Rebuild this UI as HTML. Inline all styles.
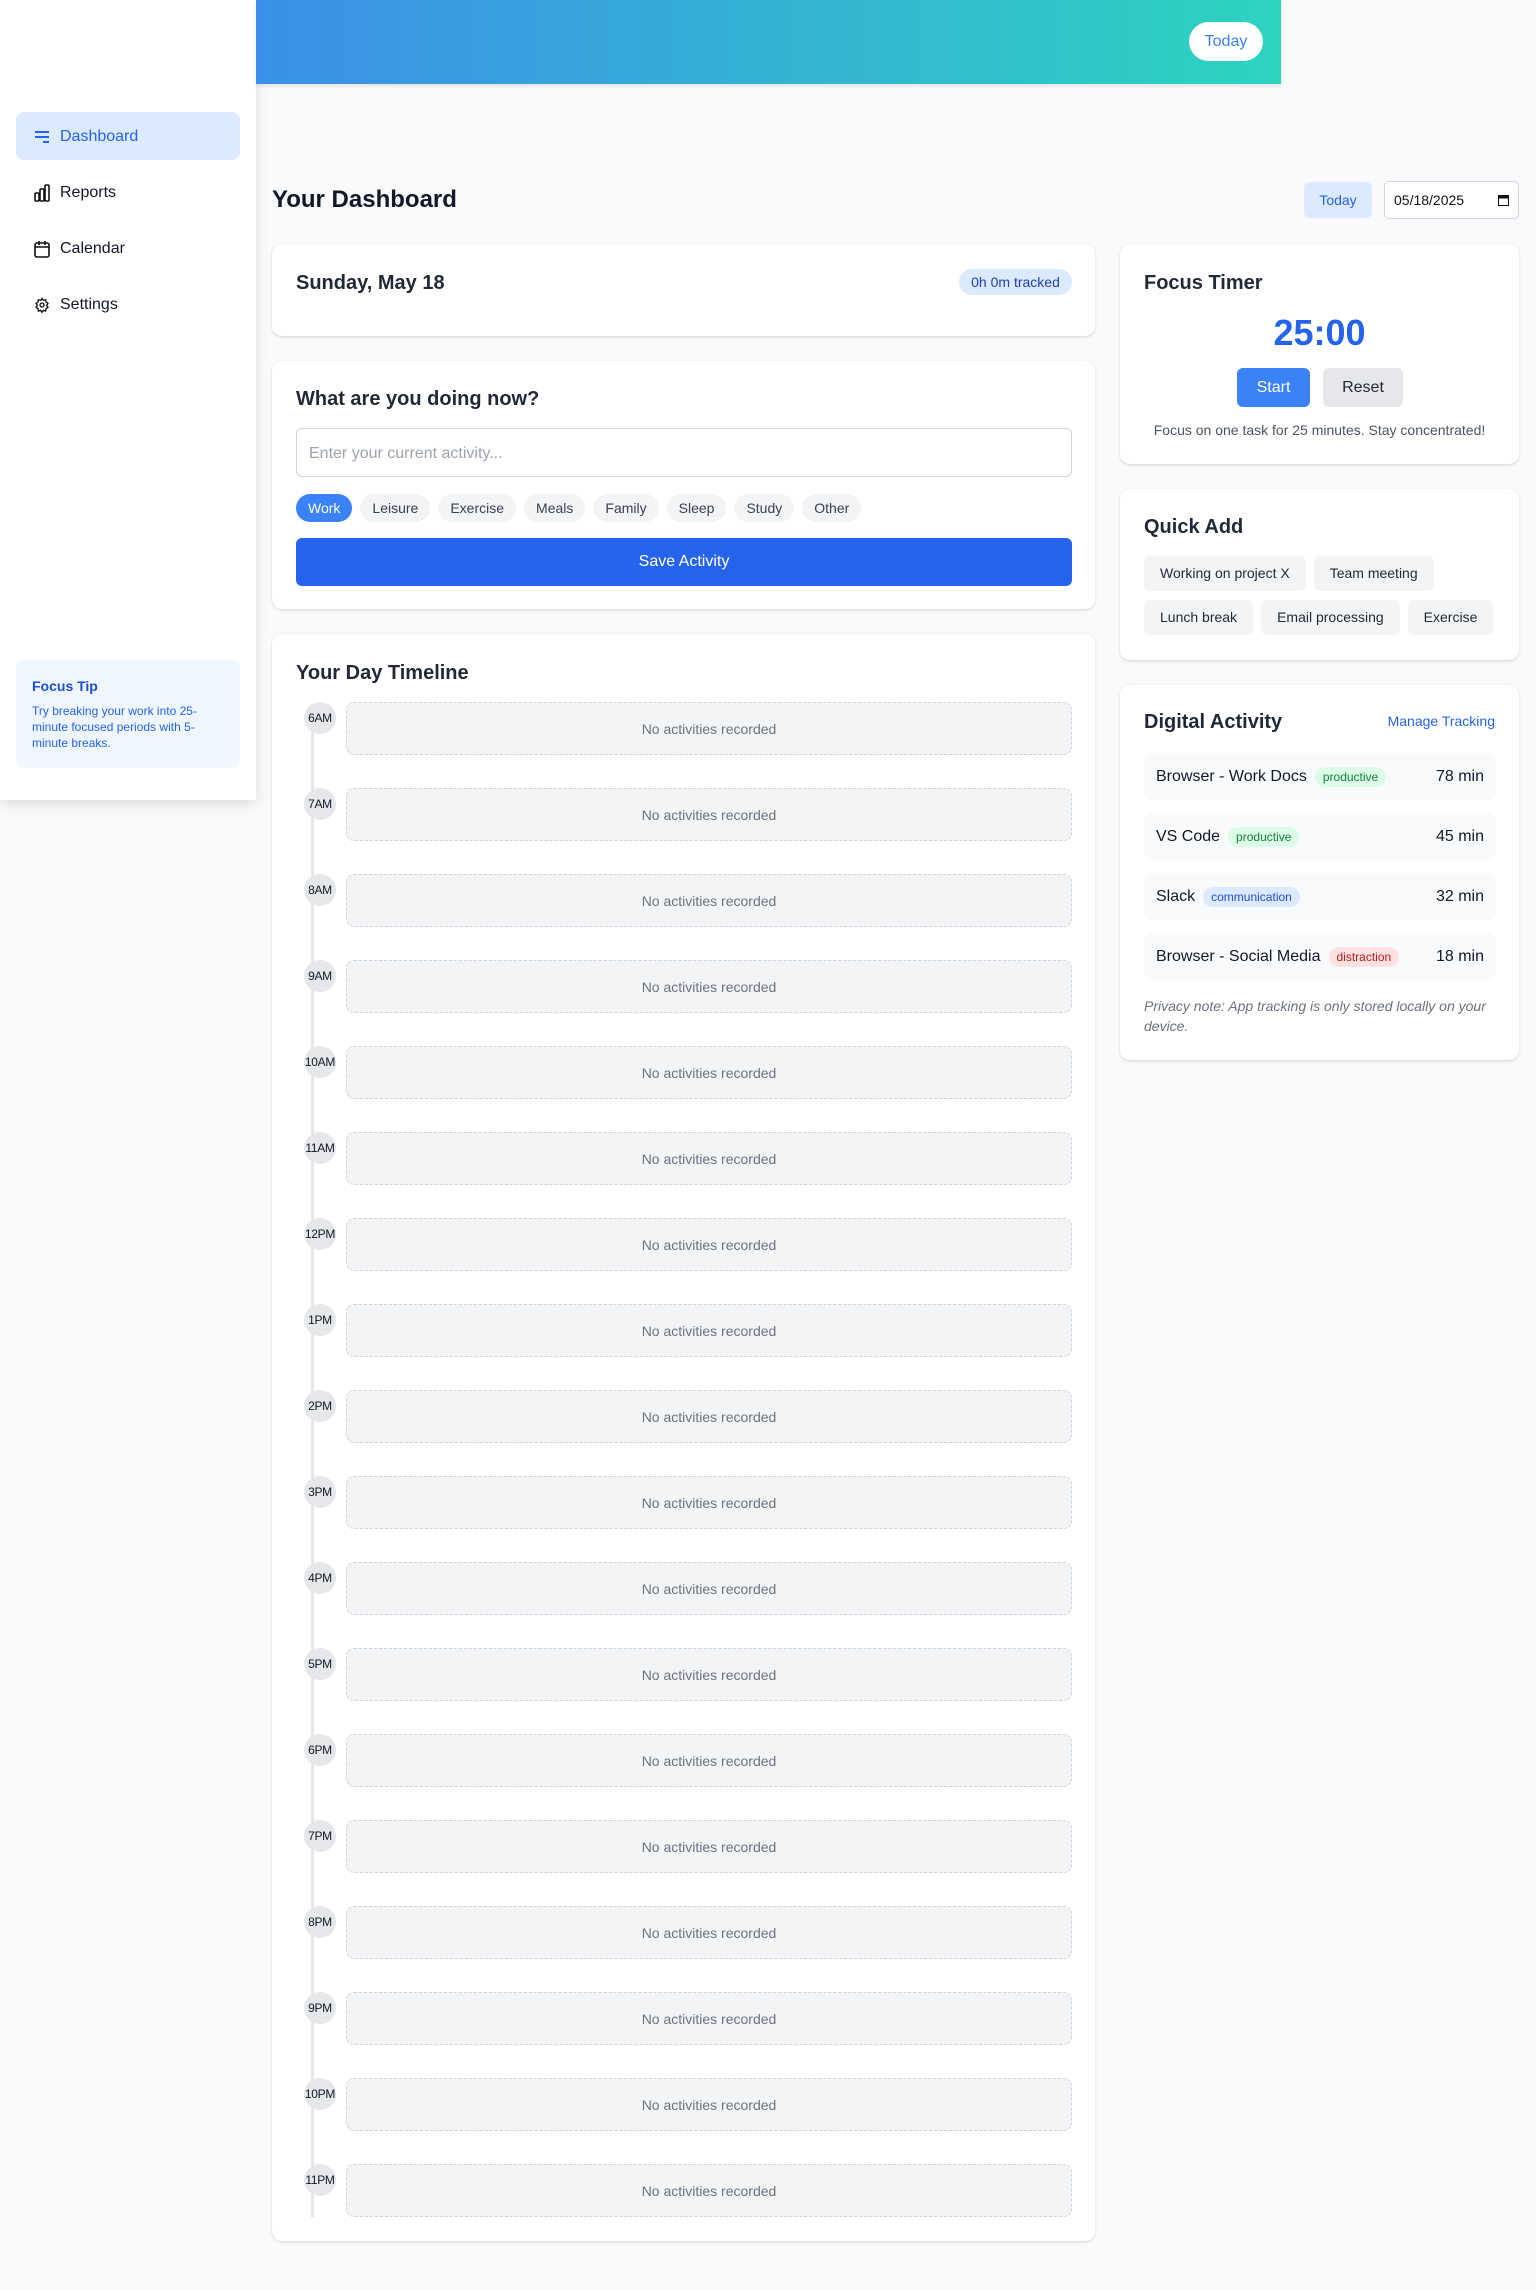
<!DOCTYPE html>
<html><head><meta charset="utf-8"><style>
*{box-sizing:border-box;margin:0;padding:0}
body{width:1536px;height:2290px;background:#f9fafb;font-family:"Liberation Sans",Arial,sans-serif;position:relative;color:#1f2937;overflow:hidden}
.abs{position:absolute}
.sidebar{left:0;top:0;width:256px;height:800px;background:#fff;box-shadow:0 4px 12px rgba(0,0,0,.12)}
.nav{position:absolute;left:16px;width:224px;height:48px;border-radius:8px;display:flex;align-items:center;padding-left:18px;padding-top:2px;font-size:16px;color:#111827}
.nav svg{margin-right:10px}
.nav.active{background:#dbeafe;color:#2563eb}
.tip{left:16px;top:660px;width:224px;height:108px;background:#eff6ff;border-radius:8px;padding:16px}
.header{left:256px;top:0;width:1025px;height:84px;background:linear-gradient(90deg,#3b8fe8,#2dd4bf);box-shadow:0 2px 4px rgba(0,0,0,.1)}
.card{position:absolute;background:#fff;border-radius:10px;box-shadow:0 1px 3px rgba(0,0,0,.1),0 1px 2px rgba(0,0,0,.06)}
h2{font-size:20px;font-weight:bold;color:#1f2937}
.chip{display:inline-block;height:28px;line-height:28px;padding:0 12px;border-radius:14px;background:#f3f4f6;color:#374151;font-size:14px;margin-right:8px}
.qa{display:inline-block;height:35px;line-height:35px;padding:0 16px;border-radius:6px;background:#f3f4f6;color:#1f2937;font-size:14px;margin-right:8px}
.slot{position:absolute;left:74px;width:726px;height:53px;background:#f3f4f6;border:1px dashed #d1d5db;border-radius:8px;text-align:center;line-height:53px;font-size:14px;color:#6b7280}
.tc{position:absolute;left:32px;width:32px;height:32px;border-radius:16px;background:#e5e7eb;font-size:12px;color:#111827;text-align:center;line-height:32px;letter-spacing:-.3px}
.item{position:absolute;left:24px;width:352px;height:47px;background:#f9fafb;border-radius:8px;display:flex;align-items:center;padding:0 12px;font-size:16px;color:#111827}
.item .t{margin-left:auto}
.bd{font-size:12px;padding:3px 8px;border-radius:10px;margin-left:8px}
.p{background:#dcfce7;color:#15803d}.c{background:#dbeafe;color:#1d4ed8}.d{background:#fee2e2;color:#b91c1c}
</style></head><body>
<div class="abs sidebar">
 <div class="nav active" style="top:112px"><svg width="16" height="16" viewBox="0 0 16 16" fill="none" stroke="#2563eb" stroke-width="2"><path d="M1 3h14M1 8h14M9 13h6"/></svg>Dashboard</div>
 <div class="nav" style="top:168px"><svg width="16" height="18" viewBox="0 0 16 18" fill="none" stroke="#111" stroke-width="1.6"><rect x="1" y="9" width="4" height="8" rx="1"/><rect x="6" y="5" width="4" height="12" rx="1"/><rect x="11" y="1" width="4" height="16" rx="1"/></svg>Reports</div>
 <div class="nav" style="top:224px"><svg width="16" height="18" viewBox="0 0 16 18" fill="none" stroke="#111" stroke-width="1.6"><rect x="1" y="3" width="14" height="14" rx="2"/><path d="M1 7h14M5 1v4M11 1v4"/></svg>Calendar</div>
 <div class="nav" style="top:280px"><svg width="16" height="16" viewBox="0 0 24 24" fill="none" stroke="#111" stroke-width="2"><circle cx="12" cy="12" r="3"/><path d="M12 2l2 3 3.5-1 .5 3.5 3 2-2 3 2 3-3 2-.5 3.5-3.5-1-2 3-2-3-3.5 1-.5-3.5-3-2 2-3-2-3 3-2 .5-3.5 3.5 1z"/></svg>Settings</div>
 <div class="abs tip"><div style="font-size:14px;font-weight:bold;color:#1d4ed8;margin-top:2px">Focus Tip</div><div style="font-size:12px;line-height:16px;color:#2563eb;margin-top:9px">Try breaking your work into 25-minute focused periods with 5-minute breaks.</div></div>
</div>
<div class="abs header"><div class="abs" style="left:933px;top:22px;width:74px;height:39px;border-radius:20px;background:#fff;color:#3b82f6;font-size:16px;text-align:center;line-height:40px">Today</div></div>

<div class="abs" style="left:272px;top:186px;font-size:24px;font-weight:bold;color:#111827">Your Dashboard</div>
<div class="abs" style="left:1304px;top:182px;width:68px;height:36px;background:#dbeafe;color:#2563eb;border-radius:6px;font-size:14px;text-align:center;line-height:36px">Today</div>
<div class="abs" style="left:1384px;top:181px;width:135px;height:38px;background:#fff;border:1px solid #d1d5db;border-radius:5px;font-size:14px;line-height:36px;padding-left:9px;color:#111">05/18/2025<svg style="position:absolute;right:9px;top:12px" width="11" height="12" viewBox="0 0 11 12"><rect x="0.5" y="1.5" width="10" height="10" fill="none" stroke="#111"/><rect x="0.5" y="1.5" width="10" height="3" fill="#111"/></svg></div>

<div class="card" style="left:272px;top:244px;width:823px;height:92px">
 <h2 class="abs" style="left:24px;top:28px">Sunday, May 18</h2>
 <div class="abs" style="left:687px;top:25px;width:113px;height:26px;border-radius:13px;background:#dbeafe;color:#1e40af;font-size:14px;text-align:center;line-height:26px">0h 0m tracked</div>
</div>
<div class="card" style="left:272px;top:361px;width:823px;height:248px">
 <h2 class="abs" style="left:24px;top:27px">What are you doing now?</h2>
 <div class="abs" style="left:24px;top:67px;width:776px;height:49px;border:1px solid #d1d5db;border-radius:6px;font-size:16px;color:#9ca3af;line-height:49px;padding-left:12px">Enter your current activity...</div>
 <div class="abs" style="left:24px;top:133px;white-space:nowrap"><span class="chip" style="background:#3b82f6;color:#fff">Work</span><span class="chip">Leisure</span><span class="chip">Exercise</span><span class="chip">Meals</span><span class="chip">Family</span><span class="chip">Sleep</span><span class="chip">Study</span><span class="chip">Other</span></div>
 <div class="abs" style="left:24px;top:177px;width:776px;height:48px;background:#2563eb;border-radius:6px;color:#fff;font-size:16px;text-align:center;line-height:48px">Save Activity</div>
</div>
<div class="card" style="left:272px;top:634px;width:823px;height:1607px">
 <h2 class="abs" style="left:24px;top:28px">Your Day Timeline</h2>
 <div class="abs" style="left:39px;top:84px;width:3px;height:1500px;background:#e5e7eb"></div>
 <div id="tl"></div>
</div>

<div class="card" style="left:1120px;top:244px;width:399px;height:220px">
 <h2 class="abs" style="left:24px;top:28px">Focus Timer</h2>
 <div class="abs" style="left:0;top:68px;width:399px;text-align:center;font-size:36px;font-weight:bold;color:#2563eb">25:00</div>
 <div class="abs" style="left:117px;top:124px;width:73px;height:39px;background:#3b82f6;color:#fff;border-radius:6px;font-size:16px;text-align:center;line-height:40px">Start</div>
 <div class="abs" style="left:203px;top:124px;width:80px;height:39px;background:#e5e7eb;color:#1f2937;border-radius:6px;font-size:16px;text-align:center;line-height:40px">Reset</div>
 <div class="abs" style="left:0;top:178px;width:399px;text-align:center;font-size:14px;color:#4b5563">Focus on one task for 25 minutes. Stay concentrated!</div>
</div>
<div class="card" style="left:1120px;top:489px;width:399px;height:171px">
 <h2 class="abs" style="left:24px;top:27px">Quick Add</h2>
 <div class="abs" style="left:24px;top:67px;width:375px;line-height:0;white-space:nowrap"><span class="qa">Working on project X</span><span class="qa">Team meeting</span></div>
 <div class="abs" style="left:24px;top:111px;width:375px;line-height:0;white-space:nowrap"><span class="qa">Lunch break</span><span class="qa">Email processing</span><span class="qa">Exercise</span></div>
</div>
<div class="card" style="left:1120px;top:685px;width:399px;height:375px">
 <h2 class="abs" style="left:24px;top:26px">Digital Activity</h2>
 <div class="abs" style="right:24px;top:28px;font-size:14px;color:#2563eb">Manage Tracking</div>
 <div class="item" style="top:68px">Browser - Work Docs<span class="bd p">productive</span><span class="t">78 min</span></div>
 <div class="item" style="top:128px">VS Code<span class="bd p">productive</span><span class="t">45 min</span></div>
 <div class="item" style="top:188px">Slack<span class="bd c">communication</span><span class="t">32 min</span></div>
 <div class="item" style="top:248px">Browser - Social Media<span class="bd d">distraction</span><span class="t">18 min</span></div>
 <div class="abs" style="left:24px;top:311px;width:360px;font-size:14px;line-height:20px;font-style:italic;color:#6b7280">Privacy note: App tracking is only stored locally on your device.</div>
</div>
<script>
var h=["6AM","7AM","8AM","9AM","10AM","11AM","12PM","1PM","2PM","3PM","4PM","5PM","6PM","7PM","8PM","9PM","10PM","11PM"],s="";
for(var i=0;i<h.length;i++){var t=68+i*86;s+='<div class="tc" style="top:'+t+'px">'+h[i]+'</div><div class="slot" style="top:'+t+'px">No activities recorded</div>';}
document.getElementById("tl").innerHTML=s;
</script>
</body></html>
